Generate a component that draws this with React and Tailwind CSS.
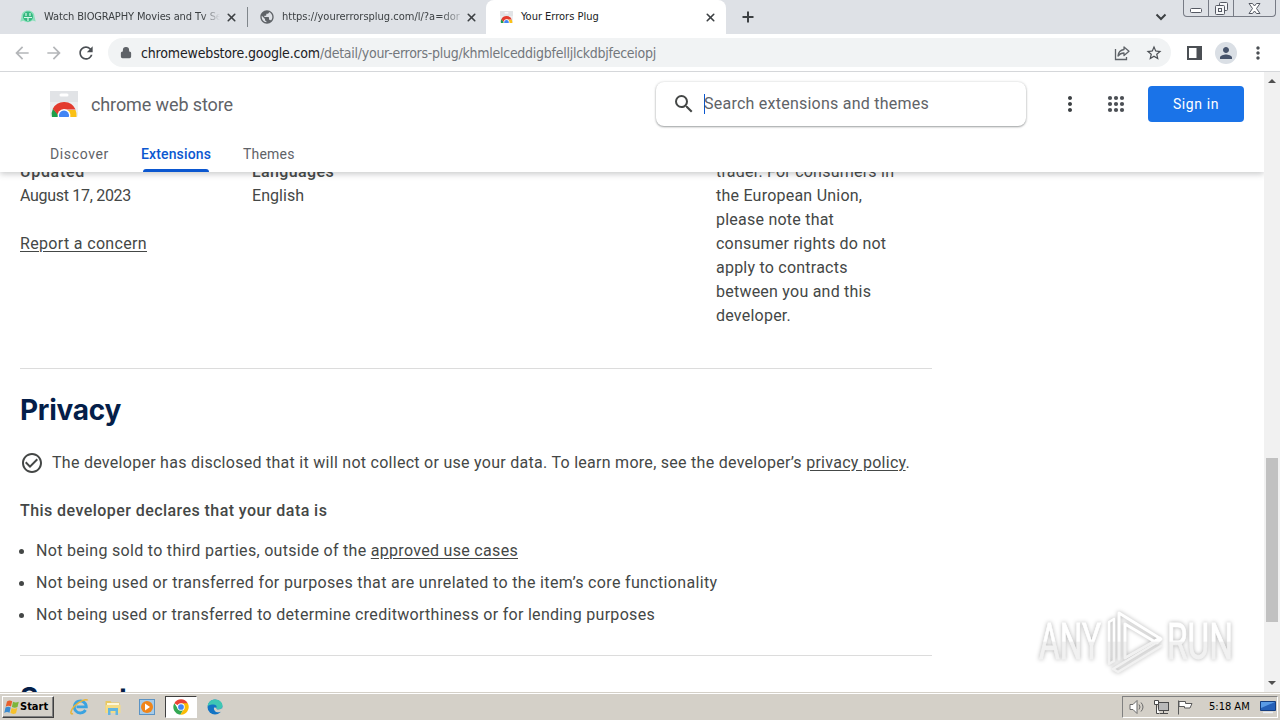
import { Lock, X } from "lucide-react";
import { MdSearch, MdMoreVert, MdArrowBack, MdArrowForward, MdRefresh, MdStarBorder, MdPerson, MdPublic, MdCheckCircleOutline } from "react-icons/md";

const disclosures = [
  { id: 1, text: "Not being sold to third parties, outside of the ", link: "approved use cases", tracking: "tracking-[0.308px]" },
  { id: 2, text: "Not being used or transferred for purposes that are unrelated to the item’s core functionality", tracking: "tracking-[0.345px]" },
  { id: 3, text: "Not being used or transferred to determine creditworthiness or for lending purposes", tracking: "tracking-[0.301px]" },
];

const traderLines = [
  "trader. For consumers in",
  "the European Union,",
  "please note that",
  "consumer rights do not",
  "apply to contracts",
  "between you and this",
  "developer.",
];

const appDots = [4, 10, 16];

function StoreLogo({ className }) {
  return (
    <svg viewBox="0 0 28 26" className={className}>
      <path d="M0 0h28v24a2 2 0 0 1-2 2H2a2 2 0 0 1-2-2z" fill="#eceef0" />
      <path d="M0 0h28v11H0z" fill="#e1e3e6" />
      <rect x="9.500" y="2.500" width="9" height="3" rx="1.500" fill="#fff" />
      <path d="M3 17.500L10 26H2a12.500 12.500 0 0 1 1-8.500z" fill="#1e9e4a" />
      <path d="M14 19h11.500A12.500 12.500 0 0 1 26.500 26H15z" fill="#fbc116" />
      <path d="M2.800 17.800a12.700 12.700 0 0 1 22.800.8H14L8 24z" fill="#e33b2e" />
      <path d="M7.700 26a6.500 6.500 0 1 1 12.600 0z" fill="#fff" />
      <path d="M9.200 26a5 5 0 1 1 9.600 0z" fill="#4285f4" />
    </svg>
  );
}

function ChromeLogo({ className }) {
  return (
    <svg viewBox="0 0 24 24" className={className}>
      <path d="M12 12L2 6.300A11.500 11.500 0 0 1 22 6.300L17 12z" fill="#ea4335" />
      <path d="M12 12l-4.500 2.600L2 6.200A11.500 11.500 0 0 0 11 23.450L16.600 14.500z" fill="#34a853" />
      <path d="M12 6.500h10.100A11.500 11.500 0 0 1 11 23.450l5.600-8.900z" fill="#fbbc05" />
      <circle cx="12" cy="12" r="5.600" fill="#fff" />
      <circle cx="12" cy="12" r="4.300" fill="#4285f4" />
    </svg>
  );
}

function TabClose() {
  return <X className="size-[13px] shrink-0 text-[#3c4043]" strokeWidth={3} />;
}

function TabStrip() {
  return (
    <div className="flex h-[34px] bg-[#dee1e6] text-[11px] leading-[34px] text-[#3c4043] font-['DejaVu_Sans_Condensed','DejaVu_Sans',sans-serif]">
      <div className="flex w-[247px] items-center pl-5">
        <svg viewBox="0 0 16 16" className="size-4 shrink-0">
          <path d="M8 1.500c4 0 6.500 2.500 6.500 6l1.200 5-3-1a9 9 0 0 1-9.500.3L.3 12.700l1.200-5C1.500 4 4 1.500 8 1.500z" fill="#8be0bb" />
          <circle cx="8" cy="7.500" r="5" fill="#35b880" />
          <path d="M6 4v3M10 4v3M4 8.500h8M8 9v3" stroke="#d9f7ea" strokeWidth="1.200" />
        </svg>
        <span className="ml-2 w-[176px] overflow-hidden whitespace-nowrap tracking-[-0.12px] [mask-image:linear-gradient(to_right,#000_158px,transparent)]">
          Watch BIOGRAPHY Movies and Tv Se
        </span>
        <span className="ml-[5px] flex"><TabClose /></span>
      </div>
      <div className="mt-[7px] h-5 w-px bg-[#80868b]" />
      <div className="flex w-[238px] items-center pl-[11px]">
        <MdPublic className="size-4 shrink-0 text-[#5f6368]" />
        <span className="ml-[7px] w-[178px] overflow-hidden whitespace-nowrap [mask-image:linear-gradient(to_right,#000_158px,transparent_185px)]">
          https://yourerrorsplug.com/l/?a=dor
        </span>
        <span className="ml-[5px] flex"><TabClose /></span>
      </div>
      <div className="flex w-[240px] items-center rounded-t-lg bg-white pl-3">
        <div className="flex size-4 shrink-0 items-center justify-center">
          <StoreLogo className="h-3 w-[13px]" />
        </div>
        <span className="ml-[7px] grow whitespace-nowrap text-[#202124]">Your Errors Plug</span>
        <span className="mr-[9px] flex"><TabClose /></span>
      </div>
      <div className="flex grow items-center pl-[15px]">
        <svg viewBox="0 0 14 14" className="size-[14px]">
          <path d="M7 1.500v11M1.500 7h11" stroke="#3c4043" strokeWidth="2" />
        </svg>
      </div>
      <div className="flex items-center pr-4">
        <svg viewBox="0 0 12 8" className="h-2 w-3">
          <path d="M1.500 1.500L6 6l4.500-4.500" fill="none" stroke="#3c4043" strokeWidth="2" />
        </svg>
      </div>
      <div className="mr-1 flex h-[17px] w-[93px] rounded-b border border-t-0 border-[#777b85]">
        <div className="flex w-[25px] items-center justify-center border-r border-[#777b85]">
          <svg viewBox="0 0 12 5" className="mt-1 h-[5px] w-3"><rect x=".5" y=".5" width="11" height="4" rx="1" fill="#fff" stroke="#555963" /></svg>
        </div>
        <div className="flex w-[25px] items-center justify-center border-r border-[#777b85]">
          <svg viewBox="0 0 13 13" className="size-[13px]" fill="#f5f6f8" stroke="#555963">
            <rect x="4.500" y=".5" width="8" height="8" rx="1" />
            <rect x=".5" y="3.500" width="9" height="9" rx="1" />
            <rect x="3.500" y="6.500" width="3" height="3" />
          </svg>
        </div>
        <div className="flex grow items-center justify-center">
          <svg viewBox="0 0 13 11" className="h-[11px] w-[13px]">
            <path d="M1 .5h3.500l2 2.500 2-2.500H12L8.500 5.500 12 10.500H8.500l-2-2.500-2 2.500H1l3.500-5z" fill="#fff" stroke="#555963" />
          </svg>
        </div>
      </div>
    </div>
  );
}

function Toolbar() {
  return (
    <div className="flex h-[38px] items-center border-b border-[#d5d7da] bg-white">
      <div className="flex w-[108px] items-center gap-3 pl-3">
        <MdArrowBack className="size-5 text-[#b4b6b9]" />
        <MdArrowForward className="size-5 text-[#b4b6b9]" />
        <MdRefresh className="size-5 text-[#4b4f54]" />
      </div>
      <div className="flex h-[29px] w-[1063px] items-center rounded-full bg-[#f1f3f4] pl-3">
        <Lock className="h-[13px] w-3 fill-[#5f6368] text-[#5f6368]" strokeWidth={2.5} />
        <div className="ml-[9px] grow whitespace-nowrap text-[14px] leading-5 font-['DejaVu_Sans_Condensed','DejaVu_Sans',sans-serif]">
          <span className="tracking-[-0.158px] text-[#202124]">chromewebstore.google.com</span>
          <span className="tracking-[-0.264px] text-[#73777c]">/detail/your-errors-plug/khmlelceddigbfelljlckdbjfeceiopj</span>
        </div>
        <svg viewBox="0 0 16 16" className="mr-[15px] size-4" fill="none" stroke="#5f6368" strokeWidth="1.300">
          <path d="M1.500 4v10.500h11V12" />
          <path d="M10 2l5 4.200-5 4.300V8C7.500 8 5.500 9 4 11c.3-3.500 2.500-6 6-6.500z" strokeLinejoin="round" />
        </svg>
        <MdStarBorder className="mr-2 size-[18px] text-[#4b4f54]" />
      </div>
      <svg viewBox="0 0 15 14" className="ml-4 h-[14px] w-[15px]">
        <path d="M1 1h13v12H1z" fill="none" stroke="#4b4f54" strokeWidth="2" />
        <path d="M9.500 1H14v12H9.500z" fill="#4b4f54" />
      </svg>
      <div className="ml-[13px] flex size-[22px] items-center justify-center rounded-full bg-[#dadfe5]">
        <MdPerson className="size-[18px] text-[#46536b]" />
      </div>
      <MdMoreVert className="ml-[11px] size-5 text-[#4b4f54]" />
    </div>
  );
}

function StoreHeader() {
  return (
    <header className="relative z-10 h-[100px] shrink-0 bg-white shadow-[0_2px_6px_rgba(60,64,67,0.28)]">
      <div className="flex h-16 items-center pr-5 pl-[50px]">
        <StoreLogo className="h-[26px] w-7" />
        <span className="ml-[13px] w-[565px] text-[18px] tracking-[-0.107px] text-[#5f6368]">chrome web store</span>
        <div className="flex h-11 w-[370px] items-center rounded-lg bg-white pl-4 shadow-[0_1px_2px_rgba(60,64,67,0.45),0_0_3px_rgba(60,64,67,0.18)]">
          <MdSearch className="size-6 text-[#444746]" />
          <div className="ml-2 h-5 w-px bg-[#0b57d0]" />
          <span className="-ml-px tracking-[0.241px] text-[#5f6368]">Search extensions and themes</span>
        </div>
        <MdMoreVert className="ml-8 size-6 text-[#3c4043]" />
        <svg viewBox="0 0 20 20" className="ml-6 size-5" fill="#4b4f54">
          {appDots.map((y) => appDots.map((x) => <circle key={x + "-" + y} cx={x} cy={y} r="2.100" />))}
        </svg>
        <button className="ml-[22px] h-9 w-24 rounded bg-[#1a73e8] text-[14px] tracking-[0.6px] text-white">Sign in</button>
      </div>
      <nav className="flex h-9 pl-[50px] text-[14px] leading-[37px] text-[#5f6368]">
        <span className="w-[91px] tracking-[0.62px]">Discover</span>
        <div className="flex w-[102px] flex-col text-[#0b57d0]">
          <span className="h-[33px] font-medium tracking-[0.138px]">Extensions</span>
          <div className="ml-[2px] h-[3px] w-[66px] rounded-t-full bg-[#0b57d0]" />
        </div>
        <span className="tracking-[0.2px]">Themes</span>
      </nav>
    </header>
  );
}

function Details() {
  return (
    <section className="-mt-3 flex h-[209px] w-[912px] shrink-0 border-b border-[#dcdcdc]">
      <div className="w-[232px]">
        <h3 className="font-medium tracking-[0.712px]">Updated</h3>
        <p className="tracking-[-0.301px]">August 17, 2023</p>
        <a className="mt-6 inline-block tracking-[0.338px] underline underline-offset-2">Report a concern</a>
      </div>
      <div className="w-[464px]">
        <h3 className="font-medium tracking-[0.373px]">Languages</h3>
        <p className="tracking-[0.05px]">English</p>
      </div>
      <div className="tracking-[0.23px]">
        {traderLines.map((line) => (
          <p key={line} className="whitespace-nowrap">{line}</p>
        ))}
      </div>
    </section>
  );
}

function Privacy() {
  return (
    <section className="h-[287px] w-[912px] shrink-0 border-b border-[#dcdcdc] pt-[21px]">
      <h2 className="text-[28px] leading-10 font-bold tracking-[-0.277px] text-[#041e49] font-['Inter','Roboto',sans-serif]">Privacy</h2>
      <div className="mt-[21px] flex items-center">
        <MdCheckCircleOutline className="size-6 text-[#444746]" />
        <p className="ml-2 whitespace-nowrap tracking-[0.276px]">
          The developer has disclosed that it will not collect or use your data. To learn more, see the developer’s{" "}
          <a className="underline underline-offset-2">privacy policy</a>.
        </p>
      </div>
      <h3 className="mt-6 font-medium tracking-[0.435px]">This developer declares that your data is</h3>
      <ul className="mt-4 space-y-2">
        {disclosures.map((item) => (
          <li key={item.id} className="flex items-center whitespace-nowrap">
            <span className="mr-3 -ml-px size-[5px] rounded-full bg-[#444746]" />
            <span className={item.tracking}>
              {item.text}
              {item.link && <a className="underline underline-offset-2">{item.link}</a>}
            </span>
          </li>
        ))}
      </ul>
    </section>
  );
}

// Translucent recorder logo that floats over the page
function Watermark() {
  return (
    <svg viewBox="0 0 206 76" className="absolute top-[604px] left-[1034px] h-[76px] w-[206px] drop-shadow-[0_0_2px_rgba(0,0,0,0.3)]">
      <defs>
        <linearGradient id="wm" x1="0" y1="0" x2="0" y2="76" gradientUnits="userSpaceOnUse">
          <stop offset="0.49" stopColor="#ffffff" />
          <stop offset="0.5" stopColor="#f1f1f1" />
        </linearGradient>
      </defs>
      <g fill="url(#wm)" stroke="url(#wm)" strokeWidth="0.8" fontFamily="Roboto, sans-serif" fontSize="50">
        <text x="5" y="55" textLength="62" lengthAdjust="spacingAndGlyphs">ANY</text>
        <text x="133" y="55" textLength="66" lengthAdjust="spacingAndGlyphs">RUN</text>
      </g>
      <g fill="none" stroke="url(#wm)" strokeLinejoin="round" strokeLinecap="round">
        <path d="M85 55V9l42 26-4 4-32-19v34l35-20" strokeWidth="3" />
        <path d="M80 15l-5 3v42l5-3V15M127 42L84 68l-5-3 43-26" strokeWidth="2.500" />
      </g>
    </svg>
  );
}

function Scrollbar() {
  return (
    <div className="flex w-4 flex-col items-center bg-[#f1f1f1]">
      <svg viewBox="0 0 8 4" className="mt-[7px] h-1 w-2"><path d="M0 4l4-4 4 4z" fill="#505050" /></svg>
      <div className="mt-[375px] h-[164px] w-3 bg-[#c1c1c1]" />
      <svg viewBox="0 0 8 4" className="mt-[59px] h-1 w-2"><path d="M0 0l4 4 4-4z" fill="#505050" /></svg>
    </div>
  );
}

function Taskbar() {
  return (
    <div className="flex h-7 items-center border-t border-[#d4d0c8] bg-[#d4d0c8] text-black shadow-[inset_0_1px_0_#fff] font-['DejaVu_Sans_Condensed','DejaVu_Sans',sans-serif]">
      <div className="mt-px ml-[2px] flex h-[22px] w-[52px] items-center border border-t-white border-r-[#404040] border-b-[#404040] border-l-white pl-px shadow-[inset_-1px_-1px_0_#808080]">
        <svg viewBox="0 0 16 16" className="size-4 shrink-0">
          <path d="M3 2.500c1.800-1.300 3.500-1.200 5.200-.2L7 7.500c-1.800-1-3.500-1-5.300.2z" fill="#e8602c" />
          <path d="M9 2.800c1.800 1 3.600 1 5.800 0L13.500 8c-2 1-3.800.9-5.600-.1z" fill="#7db53a" />
          <path d="M1.500 8.600c1.800-1.200 3.500-1.100 5.200-.1l-1.200 5.200c-1.800-1-3.400-1-5.200.2z" fill="#3b8bd0" />
          <path d="M7.600 9c1.800 1 3.600 1 5.700 0L12 14.200c-2 1-3.800.9-5.600-.1z" fill="#f6c12c" />
        </svg>
        <span className="text-[11px] leading-4 font-bold">Start</span>
      </div>
      <div className="ml-4 flex items-center">
        <svg viewBox="0 0 20 18" className="h-[18px] w-5" fill="none">
          <path d="M15.500 12a6 6 0 1 1 .8-3.200H6.500" stroke="#3ba3e0" strokeWidth="2.800" />
          <path d="M3 15.500C0 17 0 13 4.500 8S17 .5 17.500 2.500" stroke="#e8b53a" strokeWidth="1.600" />
        </svg>
        <svg viewBox="0 0 18 18" className="ml-[14px] size-[18px]">
          <path d="M1.500 3h5l1 1.500h8V15h-14z" fill="#e9c860" />
          <path d="M3 5h12v3H3z" fill="#fdf6d8" />
          <path d="M1.500 7h15v8h-15z" fill="#f4dc86" />
          <path d="M4 17V10h10v7h-2.500v-4h-5v4z" fill="#62b5e0" />
        </svg>
        <svg viewBox="0 0 16 16" className="ml-[17px] size-4">
          <rect x=".5" y=".5" width="15" height="15" fill="#a6cbe8" stroke="#5b93c4" />
          <circle cx="8" cy="8" r="6" fill="#f08519" />
          <path d="M6 4.500l5 3.500-5 3.500z" fill="#fff" />
        </svg>
        <div className="ml-[10px] flex h-[22px] w-8 items-center justify-center border border-t-[#404040] border-r-white border-b-white border-l-[#404040] bg-white">
          <ChromeLogo className="size-4" />
        </div>
        <svg viewBox="0 0 16 16" className="ml-[10px] size-4">
          <circle cx="8" cy="8" r="7.500" fill="#1374c4" />
          <path d="M.6 7C1.500 2.500 4.500.5 8 .5c4.500 0 7.500 3 7.500 6 0 2.500-1.800 4-4 4-2 0-2.500-.8-2-1.800C10.500 6 7 3.800.6 7z" fill="#3fc7b4" />
          <path d="M9.500 8.700c-.5 1 0 1.800 2 1.800 1.600 0 3.500-.8 4.200-2.500v4l-3 1.200C8.500 14 6.500 11 7 8.500z" fill="#d4d0c8" />
        </svg>
      </div>
      <div className="mt-px mr-[2px] ml-auto flex h-[22px] w-[156px] items-center border border-t-[#808080] border-r-white border-b-white border-l-[#808080] pl-[6px]">
        <svg viewBox="0 0 16 16" className="size-4" fill="none" stroke="#6a6a6a">
          <path d="M1 5.500h3l4-4v13l-4-4H1z" fill="#fff" />
          <path d="M10 5.500q2 2.500 0 5M12 3.500q4 4.500 0 9" />
        </svg>
        <svg viewBox="0 0 16 16" className="ml-2 size-4" stroke="#4a4a4a">
          <rect x="5.500" y="3.500" width="10" height="8" fill="#b9b9b9" />
          <path d="M7 14.500h8M10.500 12v2" fill="none" />
          <path d="M1.500 1.500h4v4h-4zM3.500 5.500v9h3" fill="#fff" />
        </svg>
        <svg viewBox="0 0 16 16" className="ml-2 size-4" stroke="#5a5a5a">
          <path d="M1.500 1.500v14" fill="none" />
          <path d="M2 2.500h6.500v2H15L13 9H7.500V7.500H2z" fill="#fff" />
        </svg>
        <span className="ml-4 w-[51px] text-[11px] whitespace-nowrap">5:18 AM</span>
        <svg viewBox="0 0 16 14" className="h-[14px] w-4 shrink-0">
          <path d="M.5 1.500h15v9H.5z" fill="#2560b8" stroke="#153e80" />
          <path d="M1 2h14L1 8z" fill="#5a9be6" />
          <path d="M3 12.500h10" stroke="#e9eef5" strokeWidth="1.500" />
        </svg>
      </div>
    </div>
  );
}

export default function App() {
  return (
    <div className="relative flex h-[720px] w-[1280px] flex-col overflow-hidden bg-white font-['Roboto','Liberation_Sans',sans-serif]">
      <TabStrip />
      <Toolbar />
      <div className="flex h-[620px]">
        <div className="flex grow flex-col overflow-hidden">
          <StoreHeader />
          <main className="flex h-[520px] flex-col overflow-hidden pl-5 text-base text-[#444746]">
            <Details />
            <Privacy />
            <h2 className="mt-[22px] shrink-0 text-[28px] leading-10 font-bold tracking-[-0.277px] text-[#041e49] font-['Inter','Roboto',sans-serif]">Support</h2>
          </main>
        </div>
        <Scrollbar />
      </div>
      <Taskbar />
      <Watermark />
    </div>
  );
}
